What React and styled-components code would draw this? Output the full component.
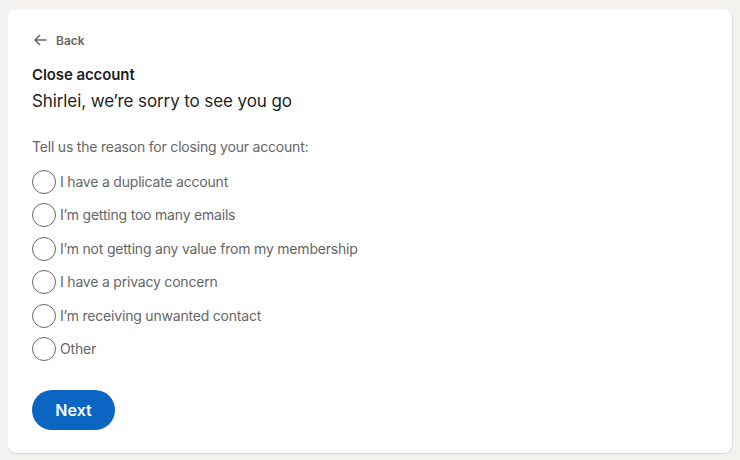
import React from 'react';
import styled, { createGlobalStyle } from 'styled-components';

const GlobalStyle = createGlobalStyle`
  html, body {
    margin: 0;
    padding: 0;
    background: #f3f2ef;
  }
  body {
    font-family: Inter, "Noto Sans", "Liberation Sans", sans-serif;
    -webkit-font-smoothing: antialiased;
  }
`;

const reasons = [
  'I have a duplicate account',
  'I’m getting too many emails',
  'I’m not getting any value from my membership',
  'I have a privacy concern',
  'I’m receiving unwanted contact',
  'Other',
];

const App = () => {
  return (
    <StyledPage>
      <GlobalStyle />
      <Card>
        <BackLink href="#">
          <svg width="16" height="16" viewBox="0 0 16 16" fill="none">
            <path d="M14.5 8H3M8 3L3 8l5 5" stroke="currentColor" strokeWidth="1.5" />
          </svg>
          Back
        </BackLink>
        <Title>Close account</Title>
        <Subtitle>Shirlei, we’re sorry to see you go</Subtitle>
        <Prompt>Tell us the reason for closing your account:</Prompt>
        <Options>
          {reasons.map((r) => (
            <Option key={r}>
              <Radio type="radio" name="reason" />
              <span>{r}</span>
            </Option>
          ))}
        </Options>
        <NextButton>Next</NextButton>
      </Card>
    </StyledPage>
  );
};

const StyledPage = styled.div`
  padding: 9px 8px 7px 8px;
  min-height: 460px;
  box-sizing: border-box;
`;

const Card = styled.section`
  background: #fff;
  border-radius: 8px;
  box-shadow: 0 1px 1px rgba(0, 0, 0, 0.12), 1px 0 1px rgba(0, 0, 0, 0.06);
  padding: 23px 24px 23px 24px;
  height: 444px;
  box-sizing: border-box;
  display: flex;
  flex-direction: column;
  align-items: flex-start;
`;

const BackLink = styled.a`
  display: flex;
  align-items: center;
  gap: 8px;
  color: #666;
  font-size: 12px;
  font-weight: 600;
  text-decoration: none;
  height: 16px;
`;

const Title = styled.h1`
  margin: 17px 0 0;
  font-size: 15px;
  font-weight: 600;
  line-height: 20px;
  letter-spacing: -0.1px;
  color: rgba(0, 0, 0, 0.9);
`;

const Subtitle = styled.h2`
  margin: 4px 0 0;
  font-size: 17px;
  font-weight: 400;
  line-height: 24px;
  letter-spacing: -0.1px;
  color: rgba(0, 0, 0, 0.9);
`;

const Prompt = styled.p`
  margin: 24px 0 13px;
  font-size: 14px;
  line-height: 20px;
  letter-spacing: -0.2px;
  color: #666;
`;

const Options = styled.div`
  display: flex;
  flex-direction: column;
  gap: 9.4px;
`;

const Option = styled.label`
  display: flex;
  align-items: center;
  gap: 4px;
  font-size: 14px;
  line-height: 24px;
  letter-spacing: -0.2px;
  color: #666;
`;

const Radio = styled.input`
  appearance: none;
  margin: 0;
  width: 24px;
  height: 24px;
  border-radius: 50%;
  border: 1px solid #666;
  box-sizing: border-box;
`;

const NextButton = styled.button`
  margin-top: 29px;
  height: 40px;
  width: 83px;
  padding: 0;
  border: none;
  border-radius: 20px;
  background: #0a66c2;
  color: #fff;
  font-family: inherit;
  font-size: 16px;
  font-weight: 600;
`;

export default App;
